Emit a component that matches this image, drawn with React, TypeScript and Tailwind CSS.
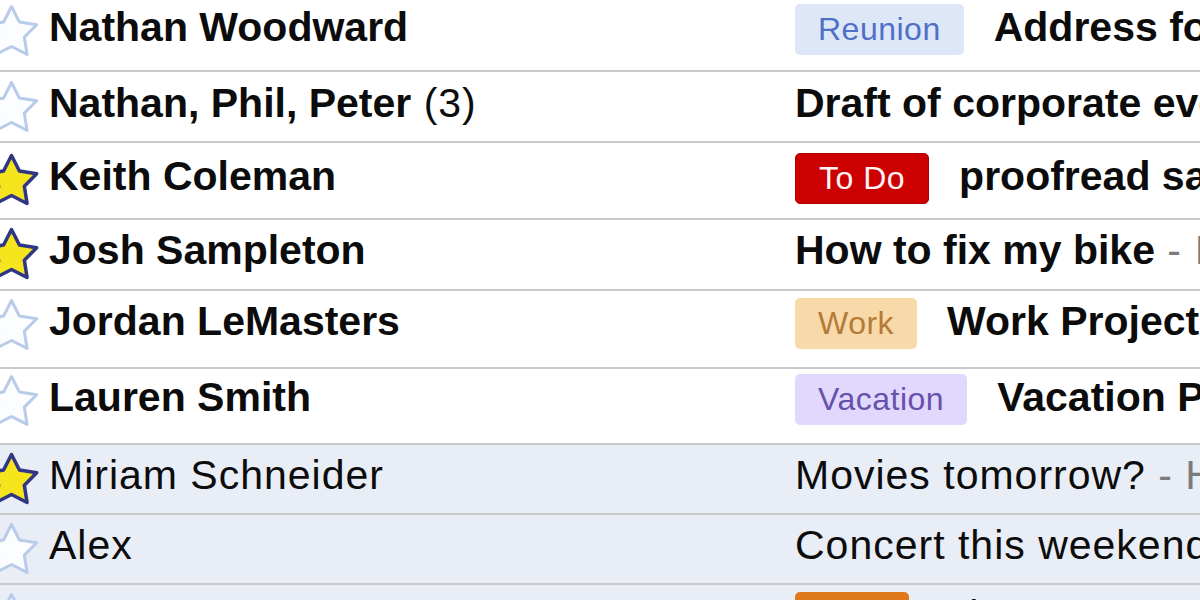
import React from "react";

type Label = {
  text: string;
  className: string;
};

type Row = {
  sender: string;
  count?: string;
  subject: string;
  snippet?: string;
  starred: boolean;
  unread: boolean;
  label?: Label;
  rowClass: string;
};

const rows: Row[] = [
  {
    sender: "Nathan Woodward",
    subject: "Address for the reunion",
    starred: false,
    unread: true,
    label: { text: "Reunion", className: "bg-[#dde7f8] text-[#4f70c6]" },
    rowClass: "h-[72px] pt-[7px]",
  },
  {
    sender: "Nathan, Phil, Peter",
    count: " (3)",
    subject: "Draft of corporate event schedule",
    starred: false,
    unread: true,
    rowClass: "h-[71px] pt-[11px]",
  },
  {
    sender: "Keith Coleman",
    subject: "proofread sales report",
    starred: true,
    unread: true,
    label: {
      text: "To Do",
      className: "bg-[#cc0000] text-[#fff4f4] border border-[#b00000]",
    },
    rowClass: "h-[77px] pt-[13px]",
  },
  {
    sender: "Josh Sampleton",
    subject: "How to fix my bike",
    snippet: " - I need some help with the brakes",
    starred: true,
    unread: true,
    rowClass: "h-[71px] pt-[10px]",
  },
  {
    sender: "Jordan LeMasters",
    subject: "Work Project update",
    starred: false,
    unread: true,
    label: { text: "Work", className: "bg-[#f8d9a9] text-[#b47b37]" },
    rowClass: "h-[78px] pt-[10px]",
  },
  {
    sender: "Lauren Smith",
    subject: "Vacation Plans",
    starred: false,
    unread: true,
    label: { text: "Vacation", className: "bg-[#e2d7fd] text-[#6651ab]" },
    rowClass: "h-[76px] pt-[8px]",
  },
  {
    sender: "Miriam Schneider",
    subject: "Movies tomorrow?",
    snippet: " - Hey, want to catch a film",
    starred: true,
    unread: false,
    rowClass: "h-[70px] pt-[10px]",
  },
  {
    sender: "Alex",
    subject: "Concert this weekend",
    starred: false,
    unread: false,
    rowClass: "h-[70px] pt-[10px]",
  },
  {
    sender: "Mom",
    subject: "Dinner on Sunday",
    starred: false,
    unread: false,
    label: { text: "Misc", className: "bg-[#e0781c] text-white" },
    rowClass: "h-[80px] pt-[10px]",
  },
];

// five-point star centred at (11.5, 32)
const starPoints = (() => {
  const cx = 11.5;
  const cy = 32;
  const outer = 26.5;
  const inner = 13.5;
  const pts: string[] = [];
  for (let i = 0; i < 10; i++) {
    const r = i % 2 === 0 ? outer : inner;
    const a = (Math.PI / 5) * i - Math.PI / 2;
    pts.push(`${(cx + r * Math.cos(a)).toFixed(2)},${(cy + r * Math.sin(a)).toFixed(2)}`);
  }
  return pts.join(" ");
})();

const Star = ({ filled }: { filled: boolean }) => (
  <svg width="49" height="64" viewBox="0 0 49 64" className="-mt-[6px] shrink-0">
    <polygon
      points={starPoints}
      fill={filled ? "#f6e51d" : "#fbfdff"}
      stroke={filled ? "#2f3684" : "#b8cbe9"}
      strokeWidth={filled ? 3.5 : 3}
      strokeLinejoin="round"
    />
  </svg>
);

const App = () => {
  return (
    <div className="h-[600px] w-[1200px] overflow-hidden bg-white font-['Liberation_Sans',Arial,sans-serif] text-[41px] leading-[41px] text-[#0c0c0c]">
      {rows.map((row) => (
        <div
          key={row.sender}
          className={`flex items-start overflow-hidden border-b-2 border-[#c8c9cb] ${row.rowClass} ${
            row.unread ? "bg-white" : "bg-[#e8edf6]"
          }`}
        >
          <Star filled={row.starred} />
          <div
            className={`w-[746px] shrink-0 whitespace-nowrap ${
              row.unread ? "font-bold" : "tracking-[1px]"
            }`}
          >
            {row.sender}
            {row.count && (
              <span className="font-normal tracking-[1px]">{row.count}</span>
            )}
          </div>
          <div className="flex items-center gap-[30px] whitespace-nowrap">
            {row.label && (
              <span
                className={`-mt-[3px] -mb-[7px] flex h-[51px] items-center rounded-[5px] px-[23px] text-[32px] tracking-[0.5px] ${row.label.className}`}
              >
                {row.label.text}
              </span>
            )}
            <span>
              <span className={row.unread ? "font-bold" : "tracking-[1px]"}>
                {row.subject}
              </span>
              {row.snippet && (
                <span className="tracking-[1px] text-[#7b7b7b]">{row.snippet}</span>
              )}
            </span>
          </div>
        </div>
      ))}
    </div>
  );
};

export default App;
